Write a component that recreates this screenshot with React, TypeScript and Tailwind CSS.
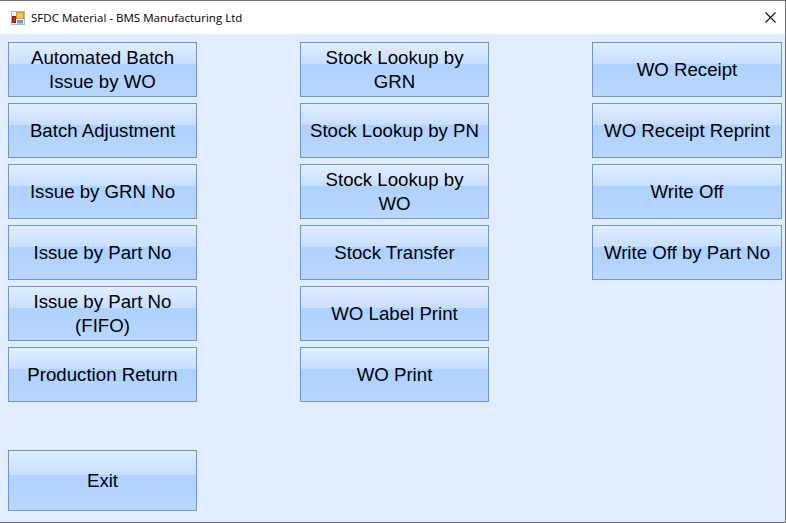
const col1 = ["Automated Batch Issue by WO", "Batch Adjustment", "Issue by GRN No", "Issue by Part No", "Issue by Part No (FIFO)", "Production Return"];
const col2 = ["Stock Lookup by GRN", "Stock Lookup by PN", "Stock Lookup by WO", "Stock Transfer", "WO Label Print", "WO Print"];
const col3 = ["WO Receipt", "WO Receipt Reprint", "Write Off", "Write Off by Part No"];

function Btn({ label, tall }: { label: string; tall?: boolean }) {
  return (
    <button
      className={`${tall ? "h-[61px]" : "h-[55px]"} w-full shrink-0 border border-[#659ada] px-[8px] text-center text-[18.67px] leading-[24px] text-black bg-[linear-gradient(to_bottom,#e0eeff_0%,#c8deff_40%,#aed1ff_40%,#b9d7ff_100%)]`}
    >
      {label}
    </button>
  );
}

function Col({ items, wide }: { items: string[]; wide?: boolean }) {
  return (
    <div className={`flex ${wide ? "w-[190px]" : "w-[189px]"} flex-col gap-[6px]`}>
      {items.map((t) => (
        <Btn key={t} label={t} />
      ))}
    </div>
  );
}

export default function App() {
  return (
    <div className="flex h-[523px] w-[786px] flex-col overflow-hidden border-b border-r border-t border-[#6f6f6f] bg-[#e1edff] font-['Liberation_Sans',sans-serif]">
      <div className="flex h-[33px] shrink-0 items-center bg-white pl-[11px] pr-[9px]">
        <svg width="14" height="14" viewBox="0 0 14 14" className="shrink-0">
          <rect x="0.5" y="0.5" width="13" height="13" fill="#f4f4f4" stroke="#b5b5b5" />
          <rect x="5.5" y="1.5" width="7" height="6" fill="#f7c948" stroke="#d1971f" />
          <rect x="1.5" y="5.5" width="3" height="6" fill="#cf2f24" stroke="#8a1a12" />
          <rect x="6" y="9" width="6" height="3.5" fill="#5f9cea" />
        </svg>
        <span className="ml-[6px] font-['Open_Sans',sans-serif] text-[11.55px] text-black">SFDC Material - BMS Manufacturing Ltd</span>
        <svg width="11" height="11" viewBox="0 0 11 11" className="ml-auto" stroke="#111" strokeWidth="1.1" fill="none">
          <path d="M0.5 0.5L10.5 10.5M10.5 0.5L0.5 10.5" />
        </svg>
      </div>
      <div className="flex flex-1 flex-col pl-[8px] pt-[8px]">
        <div className="flex gap-[103px]">
          <Col items={col1} />
          <Col items={col2} />
          <Col items={col3} wide />
        </div>
        <div className="mt-[48px] w-[189px]">
          <Btn label="Exit" tall />
        </div>
      </div>
    </div>
  );
}
